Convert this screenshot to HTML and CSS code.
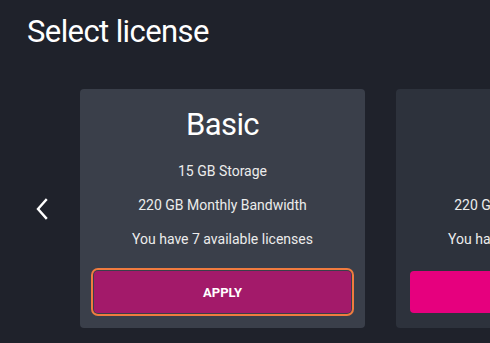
FILE: index.html
```html
<!DOCTYPE html>
<html lang="en">
<head>
  <meta charset="UTF-8" />
  <meta name="viewport" content="width=device-width, initial-scale=1" />
  <title>Select license</title>
  <link rel="stylesheet" href="styles.css">
</head>
<body>
  <h1 class="page-title">Select license</h1>

  <div class="carousel">
    <button class="nav-arrow" type="button" aria-label="Previous">
      <svg width="14" height="22" viewBox="0 0 14 22">
        <path d="M11 2 L3 11 L11 20" fill="none" stroke="#fff" stroke-width="2.4" stroke-linecap="square" />
      </svg>
    </button>

    <div class="cards">
      <div class="card card-active">
        <h2>Basic</h2>
        <p>15 GB Storage</p>
        <p>220 GB Monthly Bandwidth</p>
        <p>You have 7 available licenses</p>
        <button class="apply apply-focus" type="button">APPLY</button>
      </div>

      <div class="card">
        <h2>Pro</h2>
        <p>50 GB Storage</p>
        <p>220 GB Monthly Bandwidth</p>
        <p>You have 3 available licenses</p>
        <button class="apply" type="button">APPLY</button>
      </div>
    </div>
  </div>
</body>
</html>
```

FILE: styles.css
```css
body {
  margin: 0;
  background-color: #1f222b;
  font-family: Roboto, "Open Sans", sans-serif;
  color: #fff;
  overflow: hidden;
}

.page-title {
  margin: 14px 0 0 27px;
  font-size: 31px;
  line-height: 36px;
  font-weight: 400;
  letter-spacing: -0.6px;
}

.carousel {
  display: flex;
  align-items: center;
  margin-top: 39px;
}

.nav-arrow {
  width: 80px;
  height: 40px;
  flex-shrink: 0;
  display: flex;
  align-items: center;
  justify-content: flex-start;
  padding: 0 0 0 35px;
  background: none;
  border: none;
  cursor: pointer;
}

.cards {
  display: flex;
  gap: 31px;
}

.card {
  width: 285px;
  height: 239px;
  flex-shrink: 0;
  box-sizing: border-box;
  padding: 18px 14px 14px;
  border-radius: 4px;
  background-color: #2d323c;
  text-align: center;
  display: flex;
  flex-direction: column;
}

.card-active {
  background-color: #3a3f4a;
}

.card h2 {
  margin: 0 0 18px;
  font-size: 31px;
  line-height: 36px;
  font-weight: 400;
  letter-spacing: -0.6px;
}

.card p {
  margin: 0 0 14px;
  font-size: 14px;
  line-height: 20px;
  color: #ececec;
}

.card p:last-of-type {
  margin-bottom: 22px;
}

.apply {
  height: 42px;
  border: none;
  border-radius: 4px;
  background-color: #e6007e;
  color: #fff;
  font-family: inherit;
  font-size: 13px;
  font-weight: 700;
  cursor: pointer;
}

.apply-focus {
  background-color: #a31a6a;
  box-shadow: 0 0 0 1px #3a3f4a, 0 0 0 3px #f07b3f;
}
```
